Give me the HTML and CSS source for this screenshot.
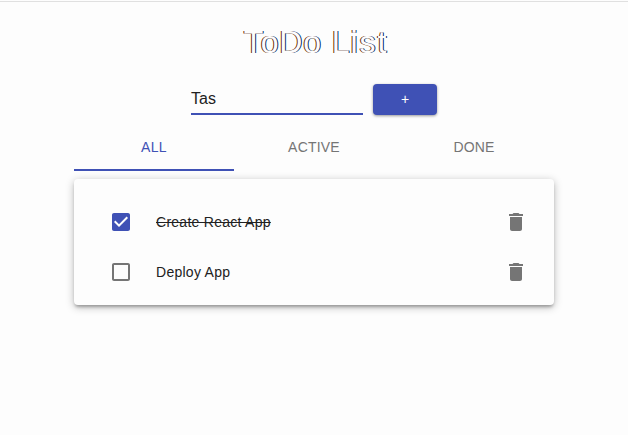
FILE: index.html
```html
<!DOCTYPE html>
<html lang="en">
<head>
<meta charset="utf-8">
<title>ToDo List</title>
<link rel="stylesheet" href="styles.css">
</head>
<body>
<main class="app">
  <h1 class="title">ToDo L<span class="loose">ist</span></h1>
  <form class="add-form">
    <div class="field">Tas</div>
    <button class="add-button" type="button">+</button>
  </form>
  <nav class="tabs">
    <div class="tab active">ALL</div>
    <div class="tab">ACTIVE</div>
    <div class="tab">DONE</div>
  </nav>
  <section class="card">
    <div class="task">
      <svg class="icon check checked" viewBox="0 0 24 24"><path d="M19 3H5c-1.11 0-2 .9-2 2v14c0 1.1.89 2 2 2h14c1.11 0 2-.9 2-2V5c0-1.1-.89-2-2-2zm-9 14l-5-5 1.41-1.41L10 14.17l7.59-7.59L19 8l-9 9z"/></svg>
      <span class="label done">Create React App</span>
      <svg class="icon" viewBox="0 0 24 24"><path d="M6 19c0 1.1.9 2 2 2h8c1.1 0 2-.9 2-2V7H6v12zM19 4h-3.5l-1-1h-5l-1 1H5v2h14V4z"/></svg>
    </div>
    <div class="task">
      <svg class="icon check" viewBox="0 0 24 24"><path d="M19 5v14H5V5h14m0-2H5c-1.1 0-2 .9-2 2v14c0 1.1.9 2 2 2h14c1.1 0 2-.9 2-2V5c0-1.1-.9-2-2-2z"/></svg>
      <span class="label">Deploy App</span>
      <svg class="icon" viewBox="0 0 24 24"><path d="M6 19c0 1.1.9 2 2 2h8c1.1 0 2-.9 2-2V7H6v12zM19 4h-3.5l-1-1h-5l-1 1H5v2h14V4z"/></svg>
    </div>
  </section>
</main>
</body>
</html>
```
FILE: styles.css
```css
* { box-sizing: border-box; }
body {
  margin: 0;
  height: 435px;
  background: #fdfdfd;
  border-top: 1px solid #fdfdfd;
  font-family: "Liberation Sans", Arial, sans-serif;
  color: #212121;
}
.app {
  border-top: 1px solid #e0e0e0;
  padding-top: 22px;
  display: flex;
  flex-direction: column;
  align-items: center;
}
.title {
  margin: 0 0 23px;
  padding-left: 4px;
  font-size: 32px;
  font-weight: 400;
  line-height: 37px;
  letter-spacing: .9px;
  color: #fdfdfd;
  text-shadow: -1px 0 0 #6b2c00, 1px 0 0 #002a66;
}
.loose { letter-spacing: 1.9px; }
.add-form { display: flex; gap: 10px; }
.field {
  width: 172px;
  height: 31px;
  border-bottom: 2px solid #3f51b5;
  font-size: 16px;
  line-height: 30px;
}
.add-button {
  width: 64px;
  height: 31px;
  padding: 0;
  border: 0;
  border-radius: 4px;
  background: #3f51b5;
  color: #fff;
  font: 14px/31px "Liberation Sans", Arial, sans-serif;
  box-shadow: 0 1px 3px rgba(0, 0, 0, .4);
}
.tabs {
  display: flex;
  width: 480px;
  height: 48px;
  margin-top: 8px;
}
.tab {
  flex: 1;
  text-align: center;
  font-size: 14px;
  line-height: 48px;
  letter-spacing: .2px;
  color: #757575;
}
.tab.active {
  letter-spacing: .4px;
  color: #3f51b5;
  border-bottom: 2px solid #3f51b5;
}
.card {
  width: 480px;
  height: 126px;
  margin-top: 8px;
  padding: 18px 26px 0 35px;
  border-radius: 4px;
  background: #fdfdfd;
  box-shadow: 0 3px 3px -1px rgba(0, 0, 0, .25), 0 2px 9px rgba(0, 0, 0, .28);
}
.task {
  display: flex;
  align-items: center;
  height: 50px;
}
.icon { width: 24px; height: 24px; fill: #757575; }
.icon.checked { fill: #3f51b5; }
.label {
  flex: 1;
  margin-left: 23px;
  font-size: 14px;
  line-height: 20px;
  letter-spacing: .27px;
}
.label.done { text-decoration: line-through; }
```
